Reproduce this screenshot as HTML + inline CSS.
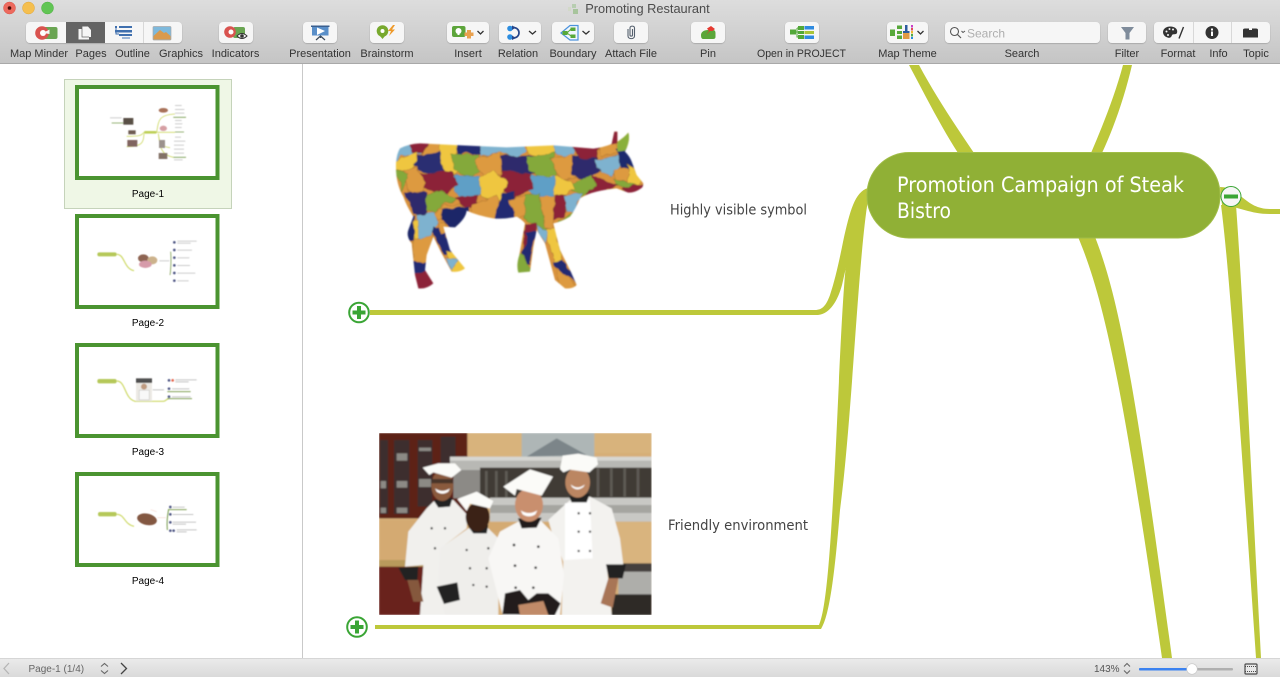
<!DOCTYPE html>
<html><head><meta charset="utf-8"><title>Promoting Restaurant</title>
<style>
html,body{margin:0;padding:0;width:1280px;height:677px;overflow:hidden;background:#fff}
svg{position:absolute;left:0;top:0;display:block}
text{font-family:"Liberation Sans",Arial,sans-serif}
text.t{font-family:"DejaVu Sans","Liberation Sans",sans-serif}
.l{font-size:11px;fill:#333;text-anchor:middle}
.p{font-size:10px;fill:#000;text-anchor:middle}
.chev{fill:none;stroke:#333;stroke-width:1.3}
.b{fill:#bdc83a}
</style></head><body>
<svg width="1280" height="677" viewBox="0 0 1280 677" xmlns="http://www.w3.org/2000/svg">
<defs>
<linearGradient id="tb" x1="0" y1="0" x2="0" y2="1"><stop offset="0" stop-color="#dddddd"/><stop offset="1" stop-color="#c5c5c5"/></linearGradient>
<linearGradient id="sb" x1="0" y1="0" x2="0" y2="1"><stop offset="0" stop-color="#ebebeb"/><stop offset="1" stop-color="#dadada"/></linearGradient>
<filter id="sh" x="-10%" y="-10%" width="120%" height="130%"><feDropShadow dx="0" dy="0.6" stdDeviation="0.5" flood-color="#000" flood-opacity=".25"/></filter>
<filter id="soft" x="-5%" y="-5%" width="110%" height="110%"><feGaussianBlur stdDeviation="2.2"/></filter>
<filter id="soft2"><feGaussianBlur stdDeviation="1.8"/></filter>
<filter id="wob" x="-5%" y="-5%" width="110%" height="110%"><feTurbulence type="fractalNoise" baseFrequency="0.035" numOctaves="2" seed="4" result="n"/><feDisplacementMap in="SourceGraphic" in2="n" scale="16" xChannelSelector="R" yChannelSelector="G"/></filter>
<clipPath id="cow"><path d="M60,85 Q85,72 120,70 L220,75 L380,82 L520,76 L640,86 Q670,82 695,72 L703,35 L712,35 L712,65 Q730,55 745,38 Q752,60 735,95 Q750,110 755,125 L770,165 L790,190 Q790,203 780,207 Q765,218 745,218 L710,205 Q675,208 650,215 Q620,222 600,235 Q585,270 570,290 Q545,305 520,310 L540,390 L570,450 L590,495 Q578,508 555,505 L525,480 L495,370 L470,330 L460,380 L450,455 L415,458 Q408,435 418,405 L435,310 Q425,298 410,290 Q375,298 340,295 Q295,288 260,272 Q258,295 225,322 L190,320 L210,390 L255,445 Q238,458 215,455 L185,400 L160,350 L140,405 L135,450 L160,490 Q140,508 115,505 L105,465 L95,370 Q78,350 85,330 L100,290 Q78,255 70,230 Q46,190 48,130 Q50,100 60,85 Z"/></clipPath>
<clipPath id="ph"><rect x="27" y="24" width="818" height="546"/></clipPath>
</defs>

<!-- canvas branches -->
<path class="b" d="M909,65 C925,95 940,125 958,153 L974,153 C955,125 935,95 919,65 Z"/>
<path class="b" d="M1123,65 C1115,95 1103,125 1091,153 L1102,153 C1115,125 1125,95 1132,65 Z"/>
<path class="b" d="M1078,237 C1105,300 1125,400 1162,658 L1172,658 C1137,400 1120,300 1095,237 Z"/>
<path class="b" d="M1221,205 C1228,260 1235,350 1256,658 L1261,658 C1250,450 1243,300 1236,205 Z"/>
<path class="b" d="M1220,187 C1240,187 1245,209 1270,209 L1280,209 L1280,214 L1270,214 C1250,214 1240,207 1222,205 Z"/>
<path class="b" d="M868,188 C855,192 850,210 843,242 C839,262 835,280 830,295 C826,306 822,310 815,310 L370,310 L370,315 L818,315 C830,314 838,300 842,285 L850,250 L862,205 Z"/>
<path class="b" d="M868,200 C858,260 852,420 840,510 C835,570 830,615 821,629 L375,629 L375,625 L819,625 C825,612 829,570 833,500 C838,420 842,280 848,250 C851,225 856,205 868,188 Z"/>

<!-- central node -->
<rect x="867" y="152.500" width="353" height="85.500" rx="42" fill="#90b036" stroke="#a1bd48" stroke-width="1"/>
<text class="t" x="897" y="192" font-size="21" fill="#fff" textLength="287" lengthAdjust="spacingAndGlyphs">Promotion Campaign of Steak</text>
<text class="t" x="897" y="218" font-size="21" fill="#fff" textLength="54" lengthAdjust="spacingAndGlyphs">Bistro</text>
<circle cx="1231" cy="196.500" r="10" fill="#f6f6f6" stroke="#3aa535" stroke-width="1"/>
<rect x="1224" y="194.500" width="14" height="4" fill="#3aa535"/>

<!-- plus toggles -->
<g fill="#fff" stroke="#3aa535" stroke-width="2">
<circle cx="359" cy="312.500" r="9.800"/><circle cx="357" cy="627" r="9.800"/></g>
<g fill="#3aa535">
<rect x="352.500" y="310.500" width="13" height="4"/><rect x="357" y="306" width="4" height="13"/>
<rect x="350.500" y="625" width="13" height="4"/><rect x="355" y="620.500" width="4" height="13"/>
</g>

<text class="t" x="670" y="214.500" font-size="14.500" fill="#444" textLength="137" lengthAdjust="spacingAndGlyphs">Highly visible symbol</text>
<text class="t" x="668" y="530" font-size="14.500" fill="#444" textLength="140" lengthAdjust="spacingAndGlyphs">Friendly environment</text>

<!-- cow -->
<g transform="translate(380,120) scale(.33333)" filter="url(#soft)">
<g clip-path="url(#cow)">
<g filter="url(#wob)" stroke="#4a3520" stroke-opacity=".25" stroke-width="2">
<rect x="-20" y="-20" width="880" height="580" fill="#d9933c" stroke="none"/>
<path fill="#7eb2cf" d="M30,60 L130,50 L130,100 L60,110 L30,150Z"/>
<path fill="#8c2238" d="M85,60 L170,55 L150,95 L95,100Z"/>
<path fill="#dd9a3f" d="M150,60 L200,60 L190,100 L130,105Z"/>
<path fill="#efc63f" d="M180,62 L230,65 L232,160 L195,170 L180,110Z"/>
<path fill="#efc63f" d="M40,125 L115,95 L105,135 L85,160 L45,150Z"/>
<path fill="#2a2f72" d="M115,105 L180,95 L195,170 L130,155 L100,135Z"/>
<path fill="#232c72" d="M225,65 L305,68 L305,105 L250,98 L235,110Z"/>
<path fill="#7eb2cf" d="M300,68 L430,65 L440,90 L400,115 L360,95 L305,110Z"/>
<path fill="#7eb2cf" d="M515,65 L585,75 L580,115 L525,100Z"/>
<path fill="#efc63f" d="M440,60 L520,58 L525,100 L490,115 L445,100Z"/>
<path fill="#84a93a" d="M215,100 L300,105 L300,150 L270,175 L220,150Z"/>
<path fill="#dd9a3f" d="M285,120 L360,95 L375,160 L320,170 L295,150Z"/>
<path fill="#2f2a6c" d="M362,108 L460,105 L460,160 L415,175 L365,155Z"/>
<path fill="#84a93a" d="M440,110 L525,100 L530,170 L490,180 L445,150Z"/>
<path fill="#dd9a3f" d="M510,115 L585,105 L590,170 L540,180Z"/>
<path fill="#2f2a6c" d="M575,110 L650,105 L660,150 L620,185 L575,165Z"/>
<path fill="#8c2238" d="M572,75 L660,72 L650,115 L600,115Z"/>
<path fill="#dd9a3f" d="M655,75 L705,60 L715,100 L665,110Z"/>
<path fill="#7eb2cf" d="M645,120 L725,105 L725,135 L695,170 L660,155Z"/>
<path fill="#1c2a6e" d="M705,85 L755,85 L765,140 L725,165 L720,120Z"/>
<path fill="#dd9a3f" d="M700,150 L745,145 L745,185 L705,180Z"/>
<path fill="#efc63f" d="M745,130 L785,180 L775,195 L745,185Z"/>
<path fill="#8c2238" d="M745,195 L800,190 L795,225 L745,230 L725,205Z"/>
<path fill="#84a93a" d="M700,178 L770,190 L745,205 L705,195Z"/>
<path fill="#8c2238" d="M635,165 L710,195 L650,225 L610,245 L635,195Z"/>
<path fill="#84a93a" d="M570,190 L635,165 L650,195 L610,230 L575,210Z"/>
<path fill="#efc63f" d="M510,165 L570,180 L585,205 L540,235 L510,220Z"/>
<path fill="#5f9fc6" d="M450,165 L525,170 L520,230 L470,240 L440,205Z"/>
<path fill="#8c2238" d="M365,150 L450,165 L460,205 L400,235 L365,205Z"/>
<path fill="#efc63f" d="M280,180 L340,150 L385,185 L360,240 L300,230Z"/>
<path fill="#5f9fc6" d="M218,165 L295,170 L300,225 L245,240 L218,200Z"/>
<path fill="#8c2238" d="M120,160 L215,155 L235,190 L195,230 L130,205Z"/>
<path fill="#dd9a3f" d="M70,155 L110,140 L140,190 L125,225 L85,215Z"/>
<path fill="#84a93a" d="M40,150 L85,160 L70,210 L60,190Z"/>
<path fill="#2f2a6c" d="M75,215 L140,220 L140,285 L100,285Z"/>
<path fill="#84a93a" d="M140,225 L185,212 L230,240 L190,250 L160,280 L138,275Z"/>
<path fill="#8c2238" d="M225,235 L290,225 L295,265 L255,265Z"/>
<path fill="#dd9a3f" d="M275,255 L350,225 L365,285 L330,305 L275,285Z"/>
<path fill="#232c72" d="M345,295 L365,220 L400,215 L410,300Z"/>
<path fill="#dd9a3f" d="M385,240 L440,225 L445,280 L410,300Z"/>
<path fill="#84a93a" d="M435,225 L480,220 L500,335 L470,320 L435,295Z"/>
<path fill="#dd9a3f" d="M480,230 L525,230 L520,330 L495,325Z"/>
<path fill="#8c2238" d="M525,225 L560,220 L550,295 L520,300Z"/>
<path fill="#7eb2cf" d="M555,225 L610,220 L580,275 L555,275Z"/>
<path fill="#84a93a" d="M530,315 L585,270 L565,310Z"/>
<path fill="#dd9a3f" d="M155,290 L190,255 L250,255 L220,275 L175,300Z"/>
<path fill="#1f2868" d="M185,265 L265,262 L265,300 L220,330 L185,300Z"/>
<path fill="#7eb2cf" d="M110,285 L160,280 L175,310 L150,350 L115,355Z"/>
<path fill="#efc63f" d="M95,310 L115,300 L115,385 L100,380Z"/>
<path fill="#1f2868" d="M75,290 L105,290 L100,360 L75,360Z"/>
<path fill="#dd9a3f" d="M100,355 L160,345 L140,430 L100,430Z"/>
<path fill="#232c72" d="M90,428 L145,425 L143,465 L95,468Z"/>
<path fill="#8c2238" d="M95,465 L140,455 L175,500 L105,520Z"/>
<path fill="#232c72" d="M160,320 L190,325 L215,395 L195,405 L160,345Z"/>
<path fill="#efc63f" d="M200,395 L225,395 L268,460 L215,465Z"/>
<path fill="#7eb2cf" d="M195,415 L235,420 L215,448Z"/>
<path fill="#dd9a3f" d="M175,310 L195,310 L200,330 L185,340Z"/>
<path fill="#8c2238" d="M435,310 L470,310 L470,340 L440,400 L428,395Z"/>
<path fill="#232c72" d="M440,335 L470,335 L450,400 L425,395 L440,365Z"/>
<path fill="#232c72" d="M425,395 L455,395 L450,430 L425,430Z"/>
<path fill="#84a93a" d="M400,405 L425,400 L460,470 L400,470Z"/>
<path fill="#7eb2cf" d="M470,315 L500,335 L500,370 L480,345Z"/>
<path fill="#efc63f" d="M495,330 L525,325 L550,430 L525,430Z"/>
<path fill="#232c72" d="M520,425 L550,420 L600,495 L565,470 L525,445Z"/>
<path fill="#dd9a3f" d="M525,445 L565,470 L600,515 L545,520Z"/>
</g>
<path fill="#8ab03b" d="M748,32 L755,60 L735,92 L712,95 L712,68Z"/>
<path fill="#8c2238" d="M700,30 L714,30 L712,70 L692,74Z"/>
</g>
</g>

<!-- chefs photo -->
<g transform="translate(370,425) scale(.33333)">
<g clip-path="url(#ph)" filter="url(#soft)">
<rect x="27" y="24" width="818" height="546" fill="#d6ae78"/>
<rect x="27" y="24" width="265" height="256" fill="#5d2018"/>
<g fill="#3d2f2d"><rect x="30" y="45" width="24" height="222"/><rect x="72" y="45" width="46" height="222"/><rect x="143" y="45" width="44" height="200"/><rect x="212" y="35" width="45" height="80"/></g>
<g fill="#8c8a85"><rect x="32" y="168" width="16" height="22"/><rect x="32" y="248" width="16" height="16"/><rect x="80" y="85" width="32" height="22"/><rect x="80" y="168" width="32" height="20"/><rect x="80" y="248" width="32" height="16"/><rect x="147" y="68" width="36" height="10"/><rect x="147" y="162" width="36" height="24"/></g>
<rect x="296" y="24" width="160" height="76" fill="#d8b37c"/>
<rect x="672" y="24" width="173" height="60" fill="#d8b37c"/>
<rect x="455" y="24" width="218" height="72" fill="#aeb6b6"/>
<path fill="#7b8589" d="M470,95 L560,40 L650,90Z"/>
<rect x="240" y="96" width="605" height="40" fill="#b8b8b4"/>
<rect x="240" y="95" width="605" height="12" fill="#d6d6d2"/>
<rect x="250" y="135" width="595" height="85" fill="#8c8a86"/>
<rect x="330" y="128" width="515" height="92" fill="#3f3a35"/>
<g fill="#5f5b55"><rect x="345" y="138" width="8" height="80"/><rect x="375" y="138" width="8" height="80"/><rect x="405" y="138" width="8" height="80"/><rect x="680" y="130" width="8" height="85"/><rect x="720" y="130" width="8" height="85"/><rect x="760" y="130" width="8" height="85"/><rect x="800" y="130" width="8" height="85"/></g>
<rect x="360" y="218" width="485" height="72" fill="#c8c8c4"/>
<rect x="360" y="240" width="485" height="24" fill="#a5a5a0"/>
<rect x="27" y="285" width="130" height="125" fill="#d4aa72"/>
<rect x="350" y="292" width="200" height="30" fill="#d4aa72"/>
<rect x="740" y="292" width="105" height="125" fill="#d9b47e"/>
<rect x="27" y="405" width="135" height="20" fill="#b89a5c"/>
<rect x="27" y="425" width="135" height="145" fill="#69241a"/>
<rect x="745" y="425" width="100" height="85" fill="#aeaeaa"/>
<rect x="745" y="415" width="100" height="25" fill="#45413c"/>
<rect x="725" y="508" width="120" height="62" fill="#2f2c28"/>
<!-- right chef -->
<path fill="#f3f2ef" d="M535,285 L600,225 L660,215 L725,250 L750,340 L760,420 L710,420 L725,570 L575,570 L580,410 L545,320Z"/>
<path fill="#fff" d="M585,235 L660,225 L668,400 L585,405Z"/>
<path fill="#222" d="M597,215 L660,205 L650,232 L605,232Z"/>
<ellipse cx="623" cy="172" rx="37" ry="46" fill="#bb8662"/>
<path fill="#fff" d="M602,178 Q622,196 645,178 L640,186 Q622,200 606,186Z"/>
<path fill="#fbfbf8" d="M570,132 L578,92 L625,86 L680,98 L684,118 L658,142 L600,134 L580,142Z"/>
<path fill="#222" d="M708,418 L768,418 L758,460 L716,460Z"/>
<path fill="#a87556" d="M715,460 L745,460 L728,548 L692,535Z"/>
<!-- left back chef -->
<path fill="#f1f0ed" d="M170,250 L195,225 L250,225 L292,270 L290,310 L225,360 L225,570 L150,570 L160,420 L105,425 L115,320Z"/>
<path fill="#222" d="M190,225 L248,218 L240,245 L205,248Z"/>
<ellipse cx="217" cy="182" rx="33" ry="46" fill="#8a5a3e"/>
<rect x="185" y="162" width="64" height="13" fill="#2e2622" opacity=".7"/>
<path fill="#fff" d="M195,190 Q217,205 240,190 L235,200 Q217,212 200,200Z"/>
<path fill="#fbfbf8" d="M158,128 L205,115 L255,115 L274,135 L245,158 L190,142 L178,150Z"/>
<path fill="#222" d="M85,428 L145,425 L142,468 L105,465Z"/>
<path fill="#85583c" d="M112,465 L145,465 L160,530 L130,530Z"/>
<!-- middle chef -->
<path fill="#efeeeb" d="M210,370 L295,310 L355,310 L385,340 L385,570 L225,570 L205,480Z"/>
<path fill="#222" d="M295,305 L355,300 L350,325 L310,325Z"/>
<ellipse cx="323" cy="276" rx="36" ry="44" fill="#3a2419"/>
<path fill="#fbfbf8" d="M262,222 L320,200 L370,228 L360,250 L300,236 L290,258Z"/>
<path fill="#222" d="M200,485 L262,472 L270,525 L222,537Z"/>
<!-- front chef -->
<path fill="#f8f7f5" d="M355,400 L390,320 L445,290 L510,285 L565,340 L582,450 L570,570 L398,570Z"/>
<path fill="#231f1f" d="M444,280 L515,278 L500,308 L455,310Z"/>
<ellipse cx="477" cy="240" rx="42" ry="50" fill="#c98f6e"/>
<path fill="#fff" d="M452,256 Q477,272 502,256 L496,268 Q477,280 458,268Z"/>
<path fill="#fbfbf8" d="M400,185 L480,133 L549,155 L515,212 L440,192 L435,212Z"/>
<path fill="#231f1f" d="M397,568 L405,505 L450,495 L475,525 L500,505 L535,505 L572,535 L555,570Z"/>
<path fill="#c08a68" d="M445,540 L520,528 L535,570 L450,570Z"/>
<g fill="#222"><circle cx="432" cy="360" r="4"/><circle cx="505" cy="365" r="4"/><circle cx="435" cy="422" r="4"/><circle cx="497" cy="428" r="4"/><circle cx="437" cy="488" r="4"/><circle cx="490" cy="488" r="4"/><circle cx="626" cy="265" r="3.500"/><circle cx="660" cy="265" r="3.500"/><circle cx="626" cy="320" r="3.500"/><circle cx="660" cy="320" r="3.500"/><circle cx="626" cy="378" r="3.500"/><circle cx="660" cy="378" r="3.500"/><circle cx="290" cy="375" r="3.500"/><circle cx="355" cy="370" r="3.500"/><circle cx="300" cy="430" r="3.500"/><circle cx="350" cy="430" r="3.500"/><circle cx="310" cy="480" r="3.500"/><circle cx="350" cy="485" r="3.500"/><circle cx="185" cy="310" r="3.500"/><circle cx="195" cy="370" r="3.500"/><circle cx="225" cy="310" r="3.500"/></g>
</g>
</g>

<!-- sidebar -->
<rect x="0" y="64" width="302" height="594" fill="#fff"/>
<rect x="302" y="64" width="1" height="594" fill="#c9c9c9"/>
<rect x="64.500" y="79.500" width="167" height="129" fill="#eff7e6" stroke="#c5d3ba"/>
<g fill="#fff" stroke="#4b9431" stroke-width="4">
<rect x="77" y="87" width="140.500" height="91"/>
<rect x="77" y="216" width="140.500" height="91"/>
<rect x="77" y="345" width="140.500" height="91"/>
<rect x="77" y="474" width="140.500" height="91"/>
</g>
<text class="p" x="148" y="197">Page-1</text>
<text class="p" x="148" y="326">Page-2</text>
<text class="p" x="148" y="455">Page-3</text>
<text class="p" x="148" y="584">Page-4</text>

<!-- thumb 1 -->
<g transform="translate(60,75) scale(.33333)" filter="url(#soft2)" opacity=".85">
<rect x="252" y="168" width="38" height="8" rx="4" fill="#b3c83a"/>
<path d="M290,172 C296,135 296,120 345,117 M290,172 H345 M252,172 C245,180 245,184 200,184 M252,176 C250,200 250,215 200,215 M295,176 C298,200 300,215 330,218 M295,176 C300,220 305,240 340,247" fill="none" stroke="#c5d24c" stroke-width="2.500"/>
<path d="M155,144 H190 M340,127 H378 M345,171 H372 M340,247 H378" stroke="#5f8a2f" stroke-width="2.500" fill="none"/>
<rect x="190" y="129" width="30" height="20" fill="#3c3028"/>
<rect x="205" y="166" width="22" height="12" fill="#544036"/>
<rect x="202" y="195" width="30" height="20" fill="#6a4a44"/>
<ellipse cx="310" cy="106" rx="14" ry="7" fill="#9a5a3e"/>
<ellipse cx="310" cy="160" rx="11" ry="8" fill="#cf8f94"/>
<rect x="297" y="195" width="18" height="24" fill="#8b8078"/>
<rect x="296" y="234" width="26" height="18" fill="#6e5a4e"/>
<g fill="#c4c4c4"><rect x="150" y="127" width="35" height="3"/><rect x="345" y="90" width="20" height="3"/><rect x="345" y="102" width="28" height="3"/><rect x="345" y="113" width="28" height="3"/><rect x="345" y="135" width="20" height="3"/><rect x="345" y="145" width="22" height="3"/><rect x="345" y="156" width="20" height="3"/><rect x="345" y="185" width="18" height="3"/><rect x="342" y="197" width="34" height="3"/><rect x="342" y="209" width="30" height="3"/><rect x="342" y="221" width="30" height="3"/><rect x="342" y="233" width="30" height="3"/><rect x="342" y="253" width="26" height="3"/></g>
</g>
<!-- thumb 2 -->
<g transform="translate(60,75) scale(.33333)" filter="url(#soft2)" opacity=".85">
<rect x="112" y="532" width="58" height="12" rx="6" fill="#a9bf3c"/>
<path d="M170,538 C195,538 190,580 222,587" fill="none" stroke="#c5d24c" stroke-width="3.500"/>
<ellipse cx="250" cy="550" rx="16" ry="12" fill="#7a4a34"/><ellipse cx="277" cy="556" rx="15" ry="12" fill="#c4a578"/><ellipse cx="256" cy="568" rx="19" ry="11" fill="#d08a9c"/>
<path d="M332,530 C334,555 332,590 330,600" fill="none" stroke="#6d9138" stroke-width="2.500"/>
<g fill="#303a70"><circle cx="343" cy="502" r="4"/><circle cx="343" cy="525" r="4"/><circle cx="343" cy="548" r="4"/><circle cx="343" cy="571" r="4"/><circle cx="343" cy="594" r="4"/><circle cx="343" cy="617" r="4"/></g>
<g fill="#c4c4c4"><rect x="352" y="497" width="58" height="3"/><rect x="352" y="503" width="40" height="3"/><rect x="352" y="524" width="44" height="3"/><rect x="352" y="547" width="36" height="3"/><rect x="352" y="570" width="38" height="3"/><rect x="352" y="593" width="54" height="3"/><rect x="352" y="616" width="34" height="3"/><rect x="298" y="556" width="30" height="3"/></g>
</g>
<!-- thumb 3 -->
<g transform="translate(60,335) scale(.33333)" filter="url(#soft2)" opacity=".85">
<rect x="112" y="132" width="58" height="13" rx="6" fill="#a9bf3c"/>
<path d="M170,138 C198,138 192,190 225,199 H310 C320,197 320,191 326,191" fill="none" stroke="#c5d24c" stroke-width="3.500"/>
<rect x="228" y="130" width="48" height="68" fill="#e9e6e0"/><rect x="228" y="130" width="48" height="14" fill="#333"/><circle cx="252" cy="155" r="9" fill="#b58a6a"/><rect x="238" y="166" width="30" height="28" fill="#f7f7f7" stroke="#999"/>
<path d="M322,170 H392 M322,191 H396" stroke="#6d9138" stroke-width="3" fill="none"/>
<g fill="#303a70"><circle cx="327" cy="136" r="4"/><circle cx="327" cy="161" r="4"/><circle cx="327" cy="185" r="4"/></g><circle cx="338" cy="136" r="4" fill="#e04a2a"/>
<g fill="#bbb"><rect x="346" y="133" width="64" height="3"/><rect x="346" y="139" width="40" height="3"/><rect x="336" y="160" width="52" height="3"/><rect x="336" y="184" width="56" height="3"/><rect x="278" y="163" width="34" height="3"/></g>
</g>
<!-- thumb 4 -->
<g transform="translate(60,335) scale(.33333)" filter="url(#soft2)" opacity=".85">
<rect x="114" y="531" width="56" height="13" rx="6" fill="#a9bf3c"/>
<path d="M170,538 C195,538 192,568 222,574" fill="none" stroke="#c5d24c" stroke-width="3.500"/>
<ellipse cx="261" cy="553" rx="30" ry="17" fill="#6e3a22" transform="rotate(12 261 553)"/>
<path d="M326,522 C322,545 320,560 322,585" fill="none" stroke="#5f8a2f" stroke-width="3"/>
<path d="M326,524 H380" stroke="#6d9138" stroke-width="3"/>
<path d="M290,530 L272,524 M292,548 H318" stroke="#f0c4b4" stroke-width="1.500"/>
<g fill="#303a70"><circle cx="331" cy="516" r="4"/><circle cx="331" cy="538" r="4"/><circle cx="331" cy="562" r="4"/><circle cx="331" cy="587" r="4"/><circle cx="341" cy="587" r="4"/></g>
<g fill="#bbb"><rect x="338" y="515" width="36" height="3"/><rect x="338" y="537" width="62" height="3"/><rect x="338" y="560" width="70" height="3"/><rect x="338" y="566" width="40" height="3"/><rect x="350" y="583" width="60" height="3"/><rect x="350" y="589" width="30" height="3"/></g>
</g>

<!-- toolbar -->
<rect x="0" y="0" width="1280" height="63" fill="url(#tb)"/>
<rect x="0" y="63" width="1280" height="1" fill="#a9a9a9"/>
<circle cx="9.500" cy="8" r="6" fill="#ed6a5e" stroke="#d8564b" stroke-width=".5"/><circle cx="9.500" cy="8" r="1.800" fill="#4b0d08"/>
<circle cx="28.500" cy="8" r="6" fill="#f5bf4f" stroke="#dfa63a" stroke-width=".5"/>
<circle cx="47.500" cy="8" r="6" fill="#61c554" stroke="#4fae43" stroke-width=".5"/>
<rect x="572" y="4" width="4" height="4" fill="#b7cdb0"/><rect x="573" y="9" width="5" height="5" fill="#a7c49c"/><rect x="568" y="7" width="3" height="4" fill="#d2d9c8"/>
<text x="647.500" y="13" font-size="12.800" fill="#4c4c4c" text-anchor="middle">Promoting Restaurant</text>

<!-- buttons -->
<g fill="#f6f6f6" filter="url(#sh)">
<rect x="26" y="22" width="156" height="21" rx="4"/>
<rect x="219" y="22" width="34" height="21" rx="4"/>
<rect x="303" y="22" width="34" height="21" rx="4"/>
<rect x="370" y="22" width="34" height="21" rx="4"/>
<rect x="447" y="22" width="42" height="21" rx="4"/>
<rect x="499" y="22" width="42" height="21" rx="4"/>
<rect x="552" y="22" width="42" height="21" rx="4"/>
<rect x="614" y="22" width="34" height="21" rx="4"/>
<rect x="691" y="22" width="34" height="21" rx="4"/>
<rect x="785" y="22" width="34" height="21" rx="4"/>
<rect x="887" y="22" width="41" height="21" rx="4"/>
<rect x="945" y="22" width="155" height="21" rx="4"/>
<rect x="1108" y="22" width="38" height="21" rx="4"/>
<rect x="1154" y="22" width="116" height="21" rx="4"/>
</g>
<rect x="66" y="22" width="39" height="21" fill="#646464"/>
<rect x="143" y="22" width="1" height="21" fill="#d8d8d8"/>
<rect x="1193" y="22" width="1" height="21" fill="#d8d8d8"/>
<rect x="1231" y="22" width="1" height="21" fill="#d8d8d8"/>

<!-- Map Minder -->
<rect x="42" y="27" width="15.500" height="12" rx="2" fill="#6aa552"/>
<circle cx="42" cy="33" r="6.800" fill="#d9534f"/><circle cx="43" cy="33" r="3" fill="#fff"/><path d="M43,33 L49.500,29.500 V34Z" fill="#f6f6f6"/>
<!-- Pages -->
<path d="M82,26.500 H88 L91,30 V37 H89 V39.500 H78.500 V29 H82Z" fill="#f5f5f5"/><path d="M82,26.500 V37 H89" fill="none" stroke="#646464" stroke-width=".7"/>
<!-- Outline -->
<g fill="#3f6fae"><rect x="115" y="26" width="2" height="2"/><rect x="119" y="26" width="13" height="2"/><rect x="115" y="30" width="17" height="2.500"/><rect x="119" y="34" width="13" height="2"/></g><rect x="122" y="37" width="8" height="2" fill="#9db6d6"/><path d="M116,28 V34 H119" stroke="#3f6fae" fill="none"/>
<!-- Graphics -->
<rect x="153" y="26.500" width="18" height="13.500" rx="1" fill="#7eb9dc" stroke="#a9a9a9" stroke-width=".7"/><path d="M153.500,39.500 V36 L160,30 L164,33 L166,32 L170.500,36 V39.500Z" fill="#d99a4d"/>
<!-- Indicators -->
<rect x="233" y="27" width="12" height="11" rx="2" fill="#6aa552"/>
<circle cx="230" cy="32" r="5.800" fill="#d9534f"/><circle cx="231" cy="32" r="2.500" fill="#fff"/>
<path d="M237,36 Q242,31 247,36 Q242,41 237,36Z" fill="#f6f6f6" stroke="#333" stroke-width="1"/><circle cx="242" cy="36" r="1.800" fill="#333"/>
<!-- Presentation -->
<rect x="312" y="26" width="16.500" height="9.500" fill="#5a8fc9"/><rect x="311" y="25.500" width="18.500" height="1.500" fill="#3b5f8e"/>
<path d="M317,27.500 L325,31 L317,35Z" fill="#fff"/><path d="M320.500,35.500 V38 M320.500,36 L316,40 M320.500,36 L325,40" stroke="#3c4a5c" stroke-width="1.200" fill="none"/>
<!-- Brainstorm -->
<circle cx="382.500" cy="31" r="5.800" fill="#78a92e"/><circle cx="382.500" cy="31" r="2" fill="#fff"/><path d="M380,36 H385 L382.500,39Z" fill="#78a92e"/><path d="M393,25 L388,31 H391 L389,36 L395,29.500 H392 L395,25Z" fill="#ee9a2b"/>
<!-- Insert -->
<rect x="452" y="26" width="13.500" height="11" rx="2" fill="#5da53b"/><circle cx="458.500" cy="31" r="3" fill="#fff"/><rect x="457.500" y="33" width="2" height="2" fill="#fff"/>
<path d="M467,30 H471 V32.500 H473.500 V36 H471 V38.500 H467 V36 H464.500 V32.500 H467Z" fill="#e9a14f"/>
<path class="chev" d="M477.500,31 L480.500,34 L483.500,31"/>
<!-- Relation -->
<circle cx="510" cy="28.500" r="2.800" fill="#2c8de0"/><circle cx="510" cy="37" r="2.800" fill="#2c8de0"/>
<path d="M513,27.500 C521,27.500 521,38 513,38" fill="none" stroke="#27468a" stroke-width="1.700"/><path d="M512,25.500 L516,27.500 L512,30Z M512,35.500 L516,38 L512,40Z" fill="#27468a"/>
<path class="chev" d="M529,31 L532.500,34 L536,31"/>
<!-- Boundary -->
<path d="M561,33 L570,25.500 H578 V40 H570Z" fill="#f0f6fd" stroke="#4c93dd" stroke-width="1.200"/>
<g fill="#57a83a"><rect x="562.500" y="31" width="5" height="4"/><rect x="570.500" y="27.500" width="5" height="3.500"/><rect x="570.500" y="34.500" width="5" height="3.500"/></g><path d="M567,33 L571,29 M567,33 L571,36" stroke="#57a83a"/>
<path class="chev" d="M582.500,31 L586,34 L589.500,31"/>
<!-- Attach -->
<path d="M628,29 V36 C628,39.500 634.500,39.500 634.500,36 V28 C634.500,25.500 630,25.500 630,28 V35 C630,36.500 632.500,36.500 632.500,35 V29" fill="none" stroke="#55606e" stroke-width="1.100"/>
<!-- Pin -->
<path d="M701,35 C701,32 704,30 708,30 H713 Q715.500,30 715.500,33 V37 Q715.500,39 713,39 H703 Q701,39 701,35Z" fill="#5aa639"/>
<path d="M706,35 L709,31 L707,28.500 L711,26 L715,29 L712.500,31 L710,31Z" fill="#e53a30"/>
<!-- Open in project -->
<g fill="#52a838"><rect x="790" y="29.500" width="6" height="5"/><rect x="798" y="26" width="6" height="4"/><rect x="798" y="31" width="6" height="3"/><rect x="798" y="35" width="6" height="4"/></g>
<path d="M796,32 H798 M797,28 V37 H798 M797,28 H798" stroke="#52a838" fill="none"/>
<g fill="#2f8be0"><rect x="804.500" y="26" width="9.500" height="3.500"/><rect x="804.500" y="35.500" width="9.500" height="3.500"/></g><rect x="804.500" y="31" width="9.500" height="3" fill="#a9c53a"/>
<!-- Map Theme -->
<g fill="#57a83a"><rect x="890" y="29.500" width="5" height="4"/><rect x="897" y="25.500" width="5" height="3.500"/><rect x="890" y="33" width="5" height="3"/><rect x="897" y="31" width="5" height="3"/><rect x="897" y="35.500" width="5" height="3.500"/></g>
<rect x="905" y="25" width="2.500" height="6" fill="#2c5b9e"/><rect x="903" y="31" width="6.500" height="2" fill="#2c5b9e"/><rect x="903" y="33" width="6.500" height="6" fill="#e29a43"/>
<g><rect x="911" y="25" width="2" height="2.500" fill="#c83fc8"/><rect x="911" y="28" width="2" height="2.500" fill="#e04a5a"/><rect x="911" y="31" width="2" height="2.500" fill="#edb82f"/><rect x="911" y="34" width="2" height="2.500" fill="#4ea84a"/><rect x="911" y="37" width="2" height="2" fill="#2c8de0"/></g>
<path class="chev" d="M917.500,31 L920.500,34 L923.500,31"/>
<!-- Search -->
<circle cx="954.500" cy="31.500" r="4" fill="none" stroke="#555" stroke-width="1.100"/><path d="M957.500,34.500 L961,38" stroke="#555" stroke-width="1.200"/><path d="M961.500,31 L963,32.500 L965,31" fill="none" stroke="#555"/>
<text x="967" y="37.500" font-size="12" fill="#aeaeae">Search</text>
<!-- Filter -->
<path d="M1121,27 H1134 L1129.500,33 V39.500 H1125.500 V33Z" fill="#7f8c9b"/>
<!-- Format -->
<path d="M1170,26.500 C1176,26.500 1178,30 1177,33 C1176,35 1173,33.500 1172,35 C1171.500,37 1170,38.500 1167.500,37.500 C1164,36.500 1162,33 1163.500,30 C1164.500,28 1167,26.500 1170,26.500Z" fill="#333"/>
<g fill="#f6f6f6"><circle cx="1166.500" cy="31.500" r="1"/><circle cx="1169.500" cy="29" r="1"/><circle cx="1173" cy="29.500" r="1"/><circle cx="1168" cy="35" r="1"/></g>
<path d="M1179,38.500 L1183.500,27" stroke="#333" stroke-width="1.400"/>
<!-- Info -->
<circle cx="1212" cy="32.500" r="6.500" fill="#333"/><rect x="1211" y="31.500" width="2" height="4.500" fill="#fff"/><rect x="1211" y="28.500" width="2" height="2" fill="#fff"/>
<!-- Topic -->
<path d="M1243,30 Q1243,28.500 1245,28.500 H1249 V30 H1252 V28.500 H1256 Q1258,28.500 1258,30 V37.500 H1243Z" fill="#333"/>

<!-- labels -->
<text class="l" x="39" y="57">Map Minder</text>
<text class="l" x="91" y="57">Pages</text>
<text class="l" x="132.500" y="57">Outline</text>
<text class="l" x="181" y="57">Graphics</text>
<text class="l" x="235.500" y="57">Indicators</text>
<text class="l" x="320" y="57">Presentation</text>
<text class="l" x="387" y="57">Brainstorm</text>
<text class="l" x="468" y="57">Insert</text>
<text class="l" x="518" y="57">Relation</text>
<text class="l" x="573" y="57">Boundary</text>
<text class="l" x="631" y="57">Attach File</text>
<text class="l" x="708" y="57">Pin</text>
<text class="l" x="801.500" y="57" textLength="89" lengthAdjust="spacingAndGlyphs">Open in PROJECT</text>
<text class="l" x="907.500" y="57">Map Theme</text>
<text class="l" x="1022" y="57">Search</text>
<text class="l" x="1127" y="57">Filter</text>
<text class="l" x="1178" y="57">Format</text>
<text class="l" x="1218.500" y="57">Info</text>
<text class="l" x="1256" y="57">Topic</text>

<!-- status bar -->
<rect x="0" y="658" width="1280" height="19" fill="url(#sb)"/>
<rect x="0" y="658" width="1280" height="1" fill="#d6d6d6"/>
<path d="M9,663 L4,668.500 L9,674" fill="none" stroke="#b5b5b5" stroke-width="1.300"/>
<text x="28.500" y="672" font-size="10" fill="#666">Page-1 (1/4)</text>
<path d="M101,666.500 L104.500,663.500 L108,666.500 M101,670.500 L104.500,673.500 L108,670.500" fill="none" stroke="#666" stroke-width="1.100"/>
<path d="M121,663 L126.500,668.500 L121,674" fill="none" stroke="#444" stroke-width="1.300"/>
<text x="1094" y="672" font-size="10" fill="#555">143%</text>
<path d="M1124,666.500 L1127,663.500 L1130,666.500 M1124,670.500 L1127,673.500 L1130,670.500" fill="none" stroke="#666" stroke-width="1.100"/>
<rect x="1139" y="668" width="94" height="2.500" rx="1" fill="#b0b0b0"/>
<rect x="1139" y="668" width="53" height="2.500" rx="1" fill="#3b82f0"/>
<circle cx="1192" cy="669" r="5.300" fill="#fff" stroke="#c6c6c6" stroke-width=".6"/>
<rect x="1245" y="664" width="12" height="10" rx="1" fill="#e8e8e8" stroke="#4a4a4a" stroke-width="1.200"/>
<path d="M1245,666.500 H1257 M1245,671.500 H1257" stroke="#4a4a4a" stroke-width="1" stroke-dasharray="1 1"/>
</svg>
</body></html>
